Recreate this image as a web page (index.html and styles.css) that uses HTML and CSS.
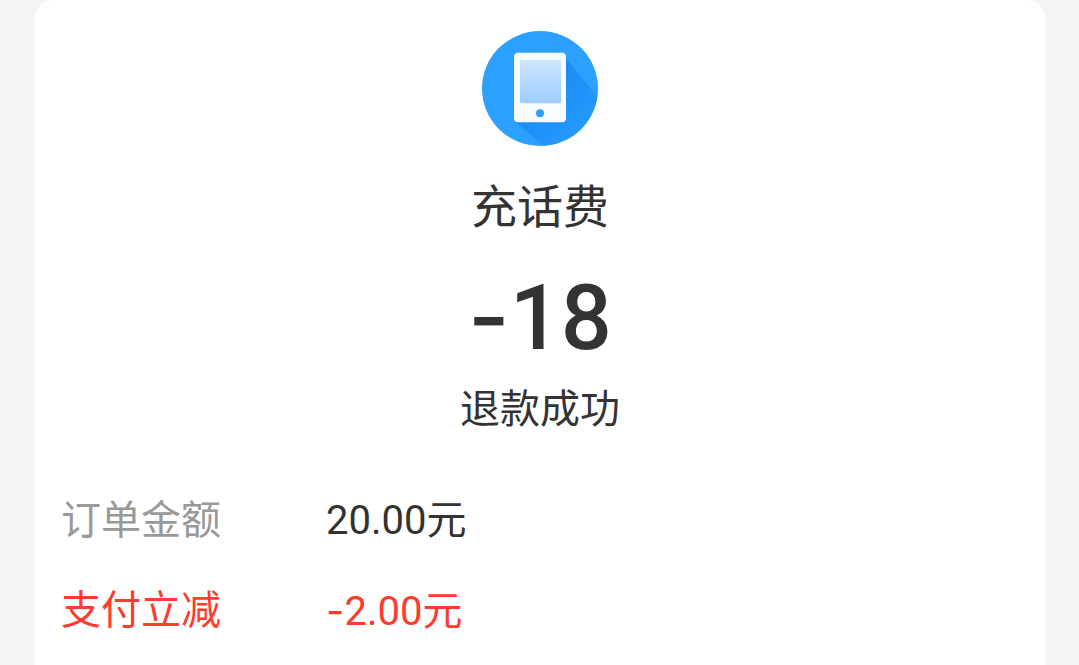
FILE: index.html
```html
<!DOCTYPE html>
<html lang="zh-CN">
<head>
<meta charset="utf-8">
<title>充话费</title>
<link rel="stylesheet" href="styles.css">
</head>
<body>
<main class="card">
  <svg class="logo" viewBox="0 0 116 116" width="116" height="115" preserveAspectRatio="none" aria-hidden="true">
    <defs>
      <linearGradient id="screen" x1="0" y1="0" x2="0" y2="1">
        <stop offset="0" stop-color="#cfe6ff"/>
        <stop offset="1" stop-color="#9ccdff"/>
      </linearGradient>
      <linearGradient id="shade" x1="0.3" y1="0.3" x2="0.95" y2="0.95">
        <stop offset="0" stop-color="#1c8cf4"/>
        <stop offset="0.45" stop-color="#1f92f8"/>
        <stop offset="1" stop-color="#2ba0ff"/>
      </linearGradient>
      <clipPath id="disc"><circle cx="58" cy="58" r="58"/></clipPath>
    </defs>
    <circle cx="58" cy="58" r="58" fill="#2ba0ff"/>
    <path clip-path="url(#disc)" d="M84 28 L116 67 L116 116 L62 116 L33 91 Z" fill="url(#shade)"/>
    <rect x="32" y="22" width="52" height="70" rx="4" fill="#f8fbff"/>
    <rect x="38" y="29" width="41" height="44" rx="2" fill="url(#screen)"/>
    <circle cx="58" cy="83" r="4" fill="#2ba0ff"/>
  </svg>
  <h1 class="title">充话费</h1>
  <div class="amount"><span class="minus">-</span>18</div>
  <div class="status">退款成功</div>
  <dl class="rows">
    <div class="row"><dt class="label">订单金额</dt><dd class="value">20.00元</dd></div>
    <div class="row row-red"><dt class="label">支付立减</dt><dd class="value"><span class="minus">-</span>2.00元</dd></div>
  </dl>
</main>
</body>
</html>
```
FILE: styles.css
```css
* { box-sizing: border-box; }
html, body { margin: 0; height: 100%; overflow: hidden; }
body {
  background: #f4f5f7;
  color: #333;
  font-family: Roboto, "Noto Sans CJK SC", sans-serif;
  padding: 0 34px 0 35px;
}
.card {
  background: #fff;
  border-radius: 18px 18px 0 0;
  height: 665px;
  padding: 31px 26px 0;
  display: flex;
  flex-direction: column;
  align-items: center;
}
.logo { display: block; flex: none; filter: blur(0.4px); }
.title {
  margin: 31px 0 0;
  font-size: 46px;
  font-weight: 400;
  line-height: 60px;
}
.amount {
  margin-top: 27px;
  font-size: 90px;
  line-height: 106px;
  font-weight: 500;
}
.minus { font-family: Inter, sans-serif; }
.status {
  margin-top: 8px;
  font-size: 40px;
  line-height: 60px;
}
.rows { margin: 51px 0 0; align-self: stretch; display: flex; flex-direction: column; gap: 30px; }
.row { display: flex; font-size: 40px; line-height: 60px; }
.label { width: 265px; color: #999; }
.value { margin: 0; }
.row-red .label, .row-red .value { color: #ff3b30; }
```
